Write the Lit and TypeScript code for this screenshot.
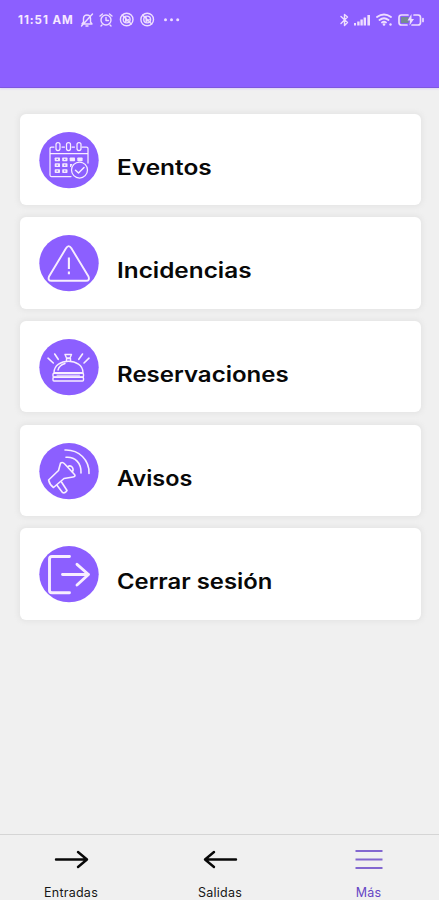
import { LitElement, html, css, svg } from "lit";
import { customElement, property } from "lit/decorators.js";
import { styleMap } from "lit/directives/style-map.js";

const calendar = svg`
  <g stroke-width="1.250">
    <path d="M15 15H12.500Q11 15 11 16.500V43Q11 44.500 12.500 44.500H32M23 15H25.500M33 15H35.500M43 15H47.500Q49 15 49 16.500V31M11 21.500H49"/>
    <rect x="17" y="10.500" width="4" height="8" rx="2"/><rect x="27.500" y="10.500" width="4" height="8" rx="2"/><rect x="38" y="10.500" width="4" height="8" rx="2"/>
    <circle cx="40.500" cy="38" r="8"/><path d="M36.500 38.200L39.500 41L45 35.500" stroke-width="1.500"/>
  </g>
  <g fill="#f3e9ff" stroke="none">
    ${[15.7, 23.2, 30.7, 38.3].map((x) => svg`<rect x=${x} y="25.500" width="5.300" height="3.800" rx=".7"/>`)}
    ${[15.7, 23.2].map((x) => svg`<rect x=${x} y="31.300" width="5.300" height="3.800" rx=".7"/><rect x=${x} y="37.200" width="5.300" height="3.800" rx=".7"/>`)}
    <path d="M31 32h2.500l-1.500 3h-1z"/>
  </g>
  <g fill="#8c5fff" stroke="none">${[26.8, 32.6, 38.5].map((y) => svg`<rect x="17.500" y=${y} width="1.500" height="1.100"/><rect x="25" y=${y} width="1.500" height="1.100"/>`)}</g>`;

const warning = svg`
  <path stroke-width="1.900" d="M27 13.300Q29.700 9 32.400 13.300L49.500 41.500Q51 45.800 47 45.800H12.500Q8.500 45.800 10 41.500Z"/>
  <path stroke-width="2.100" stroke-linecap="butt" d="M29.900 22.500V34M29.900 36.500V39.200"/>`;

const bell = svg`
  <g stroke-width="1.400">
    <path d="M15 33.700C15 18.500 44 18.500 44 33.700ZM19 31C20 27 22.500 25.500 26 24.500"/>
    <rect x="14" y="34.200" width="30.500" height="3.800" rx="1"/><rect x="14" y="38.200" width="30.500" height="3.800" rx="1"/>
    <path d="M27.500 22V19.500H31.500V22M26 15.500H32.500L31 19H27.500Z"/>
    <path stroke-width="1.600" d="M9 19.200L14.300 24M15.700 15L19.200 20.300M43.500 15L39.800 20.300M50 19.200L45 24"/>
    <path stroke-width="1" d="M18 36.200H40.500"/>
  </g>`;

const megaphone = svg`
  <g stroke-width="1.600">
    <path d="M21.500 20.200Q23.500 18.500 25.500 20.800L35.500 31.500Q37 33.500 34 34L25 35.500L14.500 44.500Q10.500 41.500 9.600 37L19.500 27.500Z"/>
    <path d="M29 23.500Q31.500 22 33.500 24.500Q34.800 27 33.300 28.700M18 42.200L23.500 49.500Q26 50.800 28 47.500L22.500 39"/>
    <path d="M27 14.300C36 13.500 42.500 20 42 30M26 7C40 6.500 50.500 17 50 30.500"/>
  </g>`;

const exit = svg`
  <path stroke-width="2.900" d="M30.500 10.500H13Q10.500 10.500 10.500 13V44.500Q10.500 46.700 13 46.700H30.500M23.500 28.500H49.500M38 18.300L49.500 28.500L38 39"/>`;

@customElement("menu-card")
export class MenuCard extends LitElement {
  static styles = css`
    :host { display: flex; box-sizing: border-box; height: 91.500px; padding: 18px 19px; background: #fff; border-radius: 6px; box-shadow: 0 0 5px 2px #e5e5e5; }
    .icon { flex: none; width: 60px; height: 57px; fill: none; stroke: #f8eeff; stroke-linecap: round; stroke-linejoin: round; }
    .disc { fill: #8c5fff; stroke: none; }
    .label { margin: 22px 0 0 18px; font: 600 21px/28px Inter, sans-serif; color: #080808; white-space: nowrap; transform-origin: 0 50%; }
  `;
  @property() label = "";
  @property({ type: Number }) stretch = 1;
  @property({ attribute: false }) icon: unknown;
  render() {
    return html`<svg class="icon" viewBox="0 0 60 57"><ellipse class="disc" cx="30" cy="28.200" rx="29.700" ry="28.100"/>${this.icon}</svg>
      <span class="label" style=${styleMap({ transform: `scaleX(${this.stretch})` })}>${this.label}</span>`;
  }
}

const items = [
  { label: "Eventos", icon: calendar, stretch: 1.163 },
  { label: "Incidencias", icon: warning, stretch: 1.159 },
  { label: "Reservaciones", icon: bell, stretch: 1.145 },
  { label: "Avisos", icon: megaphone, stretch: 1.115 },
  { label: "Cerrar sesión", icon: exit, stretch: 1.135 },
];

const blocked = (x: number) => svg`<circle cx=${x} cy="9.500" r="6.300"/><circle cx=${x} cy="9.500" r="3.400"/><path d="M${x - 4.5} 5L${x + 4.5} 14M${x - 1} 7.500V11.500L${x + 2} 9.500"/>`;

@customElement("app-root")
export class AppRoot extends LitElement {
  static styles = css`
    :host { display: flex; flex-direction: column; width: 100%; height: 900px; overflow: hidden; background: #f0f0f0; }
    header { flex: none; box-sizing: border-box; height: 88px; padding: 10px 14px 0 18px; display: flex; align-items: flex-start; justify-content: space-between; background: #8c5fff; border-bottom: 1px solid #7e57df; box-shadow: 0 1px 2px #ddd3f5; }
    .left { display: flex; }
    .time { width: 62px; font: 700 11.500px/21px Inter, sans-serif; letter-spacing: 0.95px; color: #f6e8ff; white-space: nowrap; }
    .status { display: block; height: 20px; fill: none; stroke: #eeddff; stroke-width: 1.400; stroke-linecap: round; stroke-linejoin: round; }
    .solid { fill: #eeddff; stroke: none; }
    .charge { fill: #768b92; stroke: none; }
    main { flex: 1; min-height: 0; display: flex; flex-direction: column; gap: 12.200px; padding: 25.600px 18px 0 20px; }
    nav { flex: none; box-sizing: border-box; height: 66px; display: grid; grid-template-columns: 142px 156px 141px; border-top: 1.500px solid #d5d5d5; }
    .tab { display: flex; flex-direction: column; align-items: center; padding-top: 13px; font: 400 12.500px/16px Inter, sans-serif; letter-spacing: 0.25px; color: #161616; }
    .tab svg { width: 36px; height: 24px; margin-bottom: 13px; fill: none; stroke: #080808; stroke-width: 2.400; stroke-linecap: round; stroke-linejoin: round; }
    .tab.active { width: 141px; color: #6545c5; }
    .tab.active svg { stroke: #8267d0; stroke-width: 2; stroke-linecap: butt; }
  `;
  render() {
    return html`
      <header>
        <div class="left">
          <span class="time">11:51 AM</span>
          <svg class="status" width="104" height="20" viewBox="0 0 104 20">
            <path d="M2 14H12L10.500 12V8Q10 5 7 5Q4 5 3.500 8V12ZM6 16H8M12.500 4L1.500 16"/>
            <circle cx="26" cy="10" r="5"/><path d="M20 6L22.500 4M32 6L29.500 4M26 7.500V10.500H28.500M22 15L21 16M30 15L31 16"/>
            ${blocked(46.7)}${blocked(67.2)}
            <g class="solid"><circle cx="85.500" cy="9.700" r="1.500"/><circle cx="91.500" cy="9.700" r="1.500"/><circle cx="97.700" cy="9.700" r="1.500"/></g>
          </svg>
        </div>
        <svg class="status" width="87" height="20" viewBox="0 0 87 20">
          <path d="M3 6.500L9.500 12.500L6.500 15.500V4.500L9.500 7L3 13.500"/>
          <g class="solid"><rect x="16" y="13" width="2" height="2.500"/><rect x="19.200" y="11.500" width="2.400" height="4"/><rect x="22.400" y="9.500" width="2.400" height="6"/><rect x="25.600" y="7.500" width="2.400" height="8"/><rect x="29.400" y="5" width="2.600" height="10.500"/></g>
          <path stroke-width="1.900" d="M39 7Q46 2 53 7M41.500 10Q46 6.500 50.500 10M44 12.500Q46 11 48 12.500"/>
          <circle class="solid" cx="46" cy="14.500" r="1.300"/><circle class="solid" cx="52.500" cy="14.500" r="1.200"/>
          <rect class="charge" x="63" y="7" width="7.500" height="6"/>
          <path stroke-width="1.700" d="M70 5H63.500Q61 5 61 7.500V12.500Q61 15 63.500 15H69M76 5H80Q82.500 5 82.500 7.500V12.500Q82.500 15 80 15H74M85 8.500V11.500"/>
          <path class="solid" d="M73.500 4L69.500 10.500H72L71.500 15.500L76 9H73.500Z"/>
        </svg>
      </header>
      <main>${items.map((i) => html`<menu-card .label=${i.label} .icon=${i.icon} .stretch=${i.stretch}></menu-card>`)}</main>
      <nav>
        <div class="tab"><svg viewBox="0 0 36 24"><path d="M3 11.500H34M25 4L34 11.500L25 19"/></svg>Entradas</div>
        <div class="tab"><svg viewBox="0 0 36 24"><path d="M34 11.500H3M12 4L3 11.500L12 19"/></svg>Salidas</div>
        <div class="tab active"><svg viewBox="0 0 36 24"><path d="M4.500 3H31.500M4.500 11.500H31.500M4.500 20H31.500"/></svg>Más</div>
      </nav>`;
  }
}
